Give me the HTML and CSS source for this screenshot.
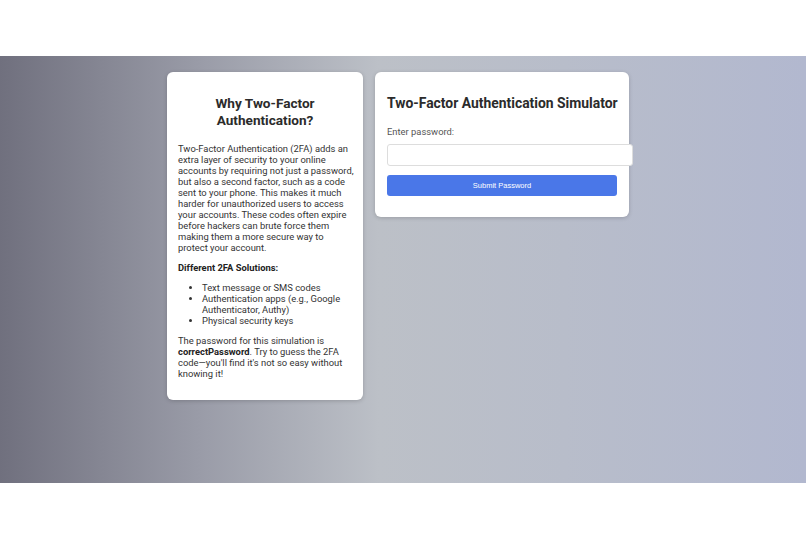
FILE: index.html
```html
<!DOCTYPE html>
<html lang="en">

<head>
    <meta charset="UTF-8">
    <meta name="viewport" content="width=device-width, initial-scale=1.0">
    <title>Two-Factor Authentication Simulator</title>
    <link rel="stylesheet" href="styles.css">
</head>

<body>
    <main class="band">
        <div class="cards">
            <section class="card info">
                <h2>Why Two-Factor Authentication?</h2>
                <p>
                    Two-Factor Authentication (2FA) adds an extra layer of security to your online accounts by
                    requiring not just a password, but also a second factor, such as a code sent to your phone. This
                    makes it much harder for unauthorized users to access your accounts. These codes often expire
                    before hackers can brute force them making them a more secure way to protect your account.
                </p>
                <p><strong>Different 2FA Solutions:</strong></p>
                <ul>
                    <li>Text message or SMS codes</li>
                    <li>Authentication apps (e.g., Google Authenticator, Authy)</li>
                    <li>Physical security keys</li>
                </ul>
                <p>
                    The password for this simulation is <strong>correctPassword</strong>. Try to guess the 2FA
                    code—you'll find it's not so easy without knowing it!
                </p>
            </section>
            <section class="card sim">
                <h2>Two-Factor Authentication Simulator</h2>
                <label for="password">Enter password:</label>
                <input type="password" id="password">
                <button type="button" id="btnSubmit">Submit Password</button>
            </section>
        </div>
    </main>
</body>

</html>
```

FILE: styles.css
```css
body {
    margin: 0;
    font-family: Roboto, 'Liberation Sans', sans-serif;
    background: #fff;
    color: #333;
}

.band {
    margin-top: 56px;
    height: 427px;
    background: linear-gradient(90deg, #70707e 0%, #9a9ca8 25%, #bcc0c7 47%, #b8bdca 70%, #b2b8cf 100%);
}

.cards {
    display: flex;
    align-items: flex-start;
    gap: 12px;
    padding: 16px 0 0 167px;
}

.card {
    background: #fff;
    border-radius: 6px;
    box-shadow: 0 1px 4px rgba(0, 0, 0, 0.18);
    box-sizing: border-box;
}

.card h2 {
    margin: 0;
    font-size: 13.6px;
    line-height: 17px;
    color: #2b2b2b;
    text-align: center;
}

.info {
    width: 196px;
    padding: 23px 8px 21px 11px;
    font-size: 9.4px;
    line-height: 11px;
}

.info h2 {
    margin-right: 3px;
    margin-bottom: 14px;
}

.info p {
    margin: 0 0 9px 0;
}

.info p:last-child {
    margin-bottom: 0;
}

.info ul {
    margin: 0 0 9px 0;
    padding-left: 24px;
}

.info strong {
    color: #222;
}

.sim {
    width: 254px;
    padding: 23px 12px 21px 12px;
}

.sim h2 {
    text-align: left;
    white-space: nowrap;
    font-size: 13.9px;
    margin-bottom: 14px;
}

.sim label {
    display: block;
    font-size: 9.4px;
    color: #555;
    margin-bottom: 7px;
}

.sim input {
    display: block;
    width: 100%;
    height: 10px;
    padding: 5px 7px;
    font-size: 8px;
    border: 1px solid #ddd;
    border-radius: 3px;
    margin: 0 0 9px 0;
}

.sim button {
    display: block;
    width: 100%;
    height: 21px;
    border: 0;
    border-radius: 3px;
    background: #4a77e8;
    color: #fff;
    font-family: 'Liberation Sans', Arial, sans-serif;
    font-size: 7.5px;
}
```
